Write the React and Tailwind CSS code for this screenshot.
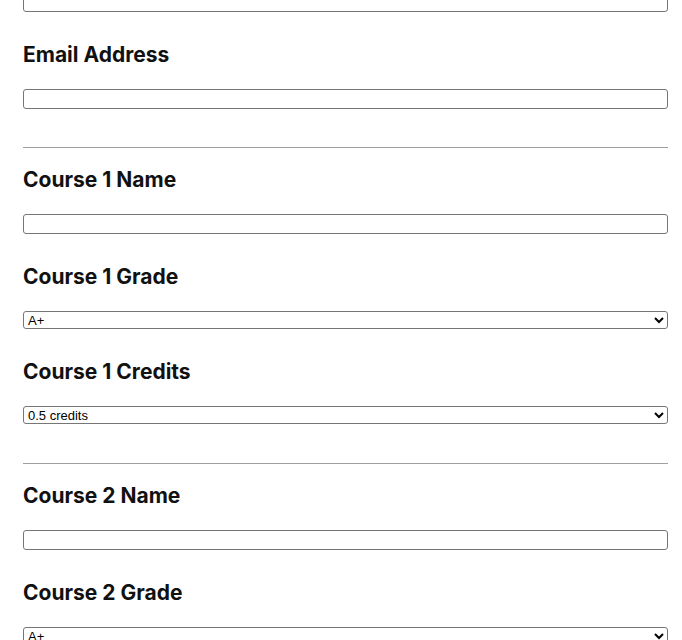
import React from "react";

const headingCls =
  "text-[21px] leading-[24px] font-bold text-[#111111] mb-[22px]";
const inputCls =
  "block w-full h-[20px] border border-[#767676] rounded-[3px] bg-white px-[2px] text-[13px] outline-none";
const selectCls =
  "block w-full h-[18px] border border-[#767676] rounded-[3px] bg-white text-[13px] leading-[14px] text-black pl-0";

function TextField({ label }) {
  return (
    <div className="mt-[31px]">
      <div className={headingCls}>{label}</div>
      <input type="text" className={inputCls} />
    </div>
  );
}

function SelectField({ label, options }) {
  return (
    <div className="mt-[31px]">
      <div className={headingCls}>{label}</div>
      <select
        className={selectCls}
        style={{ fontFamily: '"Liberation Sans", Arial, sans-serif' }}
        defaultValue={options[0]}
      >
        {options.map((o) => (
          <option key={o}>{o}</option>
        ))}
      </select>
    </div>
  );
}

const grades = ["A+", "A", "A-", "B+", "B", "B-", "C+", "C", "C-", "D+", "D", "D-", "F"];
const credits = ["0.5 credits", "1 credit", "1.5 credits", "2 credits", "3 credits", "4 credits"];

export default function App() {
  return (
    <div
      className="w-[682px] h-[640px] overflow-hidden bg-white"
      style={{ fontFamily: "Inter, 'Noto Sans', sans-serif" }}
    >
      <div className="pl-[23px] pr-[14px] mt-[-8px] flex flex-col">
        <input type="text" className={inputCls} />
        <TextField label="Email Address" />
        <hr className="mt-[38px] border-0 border-t border-[#a0a0a0]" />
        <div className="mt-[20px]">
          <div className={headingCls}>Course 1 Name</div>
          <input type="text" className={inputCls} />
        </div>
        <SelectField label="Course 1 Grade" options={grades} />
        <SelectField label="Course 1 Credits" options={credits} />
        <hr className="mt-[39px] border-0 border-t border-[#a0a0a0]" />
        <div className="mt-[20px]">
          <div className={headingCls}>Course 2 Name</div>
          <input type="text" className={inputCls} />
        </div>
        <SelectField label="Course 2 Grade" options={grades} />
      </div>
    </div>
  );
}
